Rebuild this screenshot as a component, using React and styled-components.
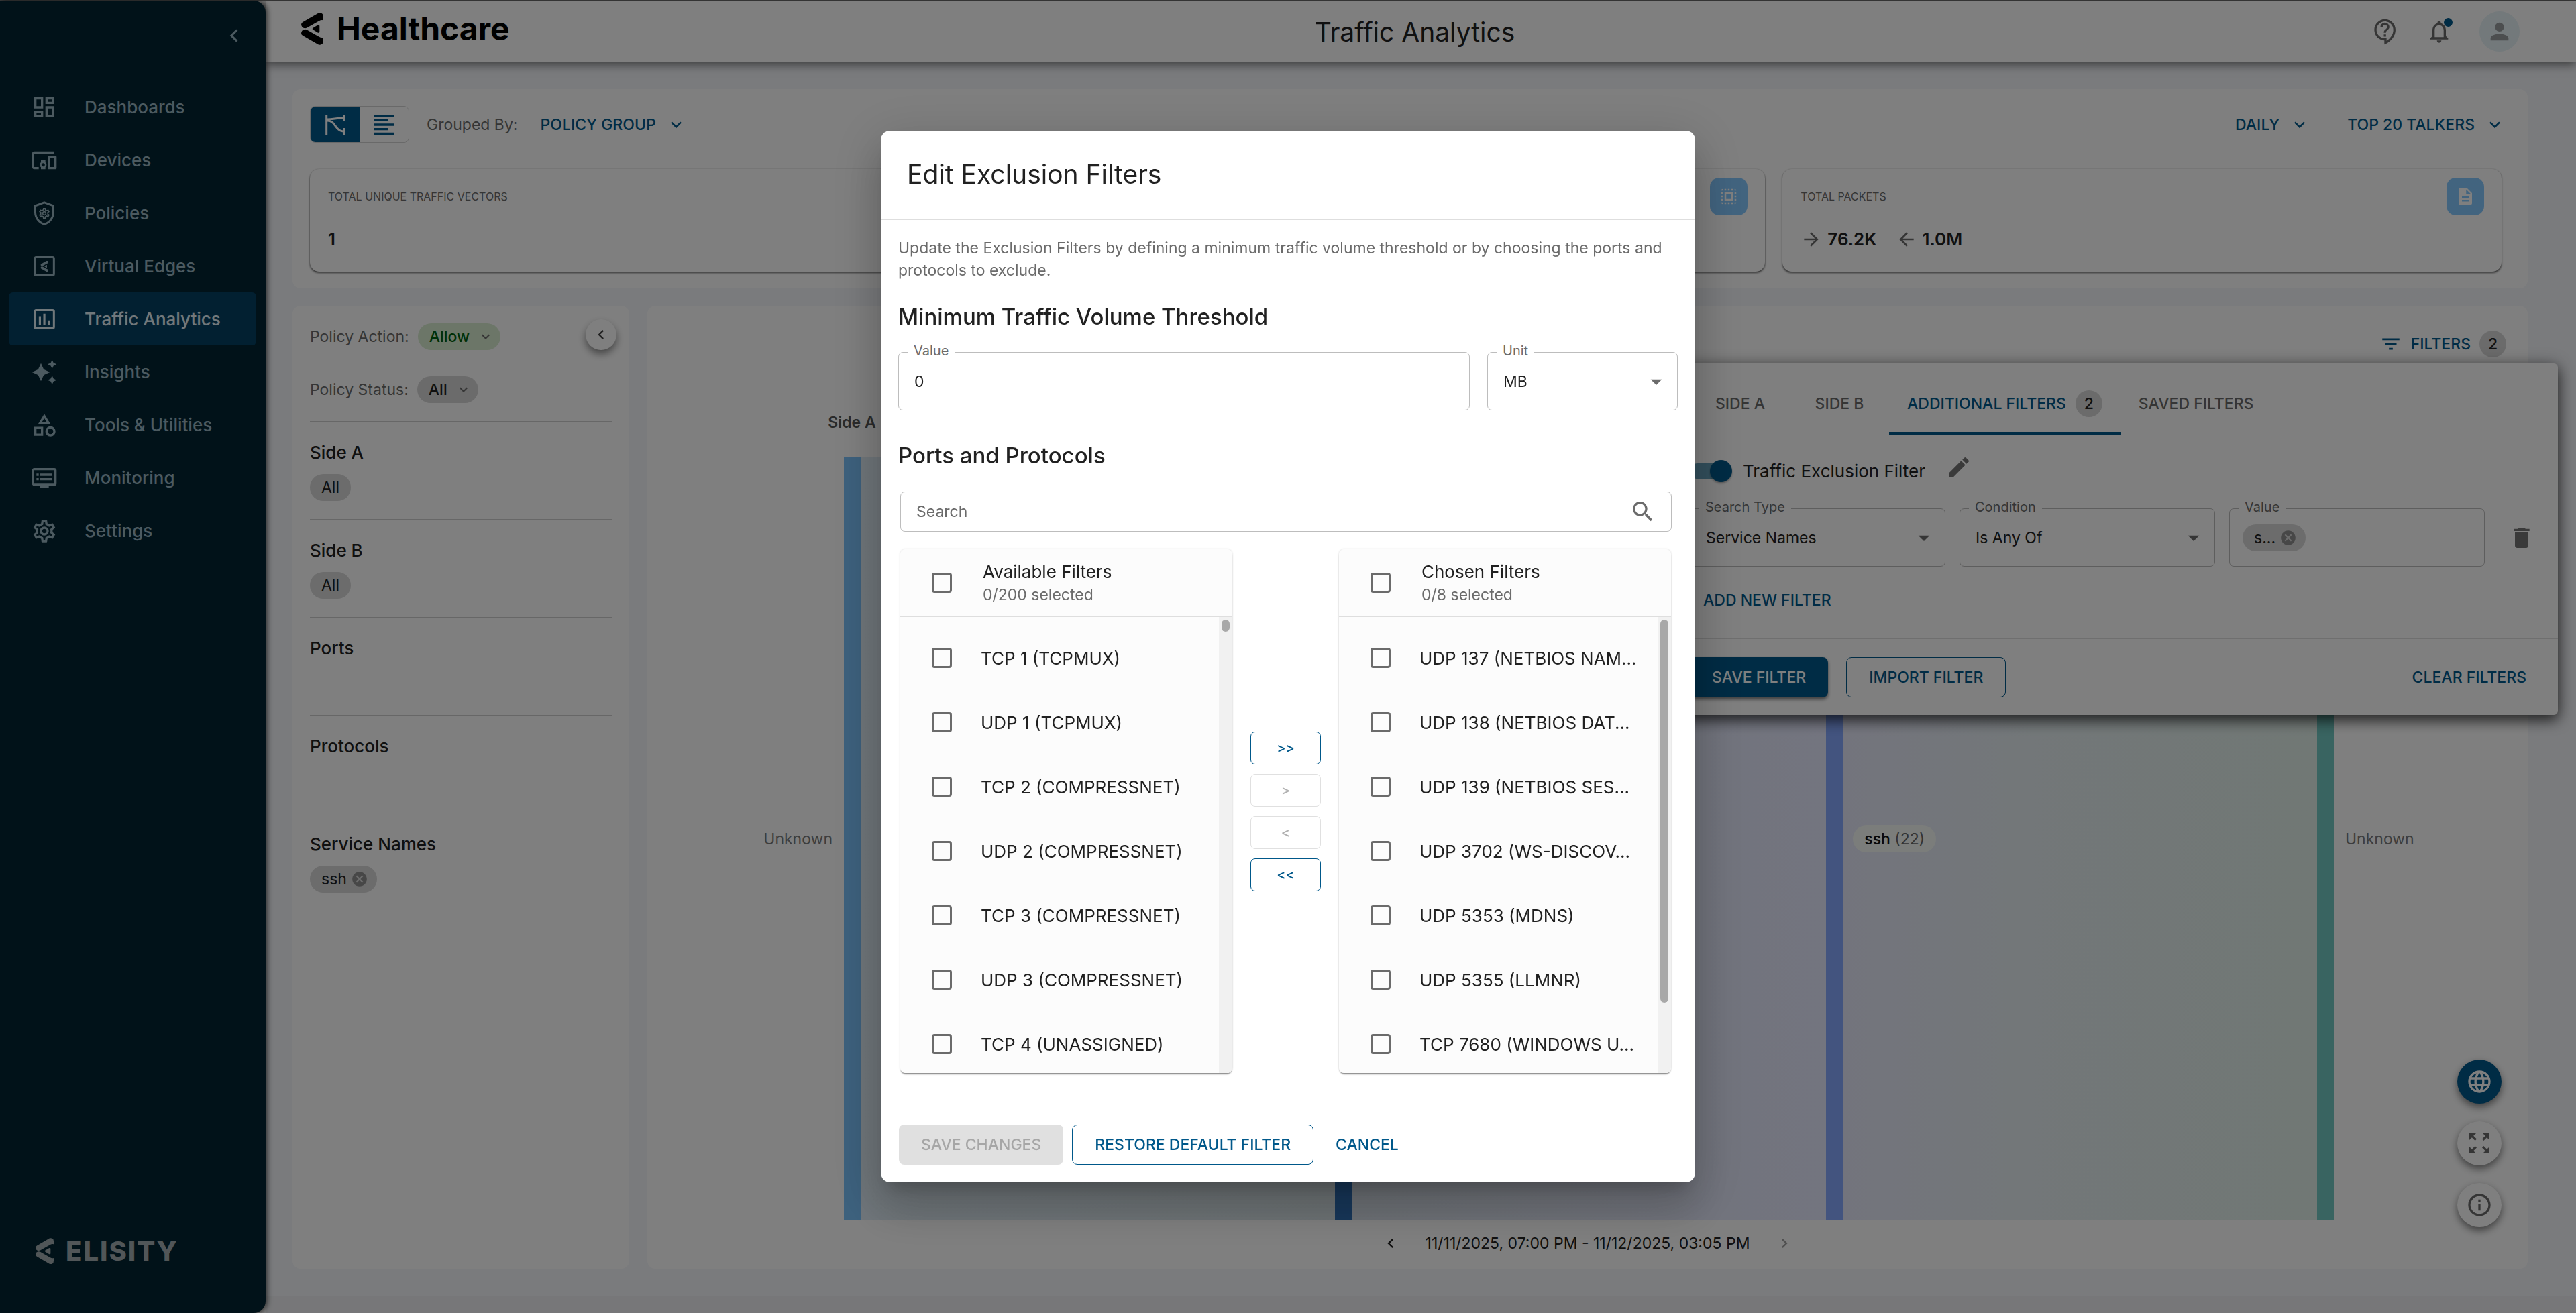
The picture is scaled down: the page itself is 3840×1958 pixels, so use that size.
import React from "react";
import styled, { createGlobalStyle } from "styled-components";
import {
  MdArrowBack,
  MdArrowDropDown,
  MdArrowForward,
  MdAutoAwesome,
  MdCancel,
  MdChevronLeft,
  MdChevronRight,
  MdDelete,
  MdDescription,
  MdDevicesOther,
  MdEdit,
  MdExpandMore,
  MdFilterList,
  MdFormatAlignLeft,
  MdInfoOutline,
  MdLanguage,
  MdNotificationsNone,
  MdOutlineCategory,
  MdOutlineContactSupport,
  MdOutlineDashboard,
  MdOutlineDvr,
  MdOutlineSettings,
  MdPerson,
  MdSearch,
  MdSelectAll,
  MdZoomOutMap,
} from "react-icons/md";

const primary = "#00588a";
const ink = "#212121";
const muted = "#6b6b6b";
const line = "#dedede";

const GlobalStyle = createGlobalStyle`
  * {
    box-sizing: border-box;
  }
  body {
    margin: 0;
    background: #f4f6fa;
    color: ${ink};
    font-family: Inter, "Liberation Sans", sans-serif;
    font-size: 23px;
  }
  button, input, select {
    font: inherit;
    color: inherit;
  }
  button {
    display: inline-flex;
    align-items: center;
    justify-content: center;
    padding: 0;
    border: 0;
    background: none;
    white-space: nowrap;
  }
  svg {
    display: block;
    flex: none;
  }
  h1, h2, h3, p, ul {
    margin: 0;
    padding: 0;
  }
`;

/* ---------- layout ---------- */

const Layout = styled.div`
  display: flex;
  min-height: 100vh;
  border-top: 1px solid #7c7c7c;
  background: #fff;
`;

const Sidebar = styled.aside`
  position: relative;
  z-index: 2;
  display: flex;
  flex-direction: column;
  flex: none;
  width: 396px;
  padding: 32px 14px 72px 13px;
  border-radius: 0 18px 18px 0;
  background: #022432;
  color: #98b4c0;
  box-shadow: 2px 0 8px rgba(0, 0, 0, 0.7);
`;

const Collapse = styled.button`
  align-self: flex-end;
  width: 40px;
  height: 40px;
  margin-right: 13px;
  margin-bottom: 47px;
`;

const NavLink = styled.a`
  display: flex;
  align-items: center;
  gap: 40px;
  height: 79px;
  padding-left: 33px;
  border-radius: 6px;
  background: ${(p) => (p.$active ? "#044062" : "none")};
  color: ${(p) => (p.$active ? "#e2f0f6" : "inherit")};
  font-size: 26px;
  font-weight: 500;
  text-decoration: none;
`;

const Brand = styled.div`
  display: flex;
  align-items: center;
  gap: 18px;
  margin-top: auto;
  padding-left: 40px;
  color: #a2acb0;
  font-size: 40px;
  font-weight: 800;
  line-height: 40px;
  letter-spacing: 2px;
`;

const Main = styled.div`
  display: flex;
  flex-direction: column;
  flex: 1;
  min-width: 0;
`;

const Header = styled.header`
  position: relative;
  z-index: 1;
  display: grid;
  grid-template-columns: 1fr auto 1fr;
  align-items: center;
  height: 92px;
  padding: 0 71px 0 53px;
  background: #fff;
  box-shadow: 0 3px 14px rgba(0, 0, 0, 0.55);
`;

const Tenant = styled.div`
  display: flex;
  align-items: center;
  gap: 20px;
  padding-bottom: 8px;
  color: #000;
  font-size: 48px;
  font-weight: 700;
  line-height: 56px;
`;

const PageTitle = styled.h1`
  font-size: 39px;
  font-weight: 400;
`;

const Actions = styled.div`
  display: flex;
  align-items: center;
  justify-content: flex-end;
  gap: 40px;
  padding-right: 13px;
  color: ${muted};
`;

const Bell = styled.button`
  position: relative;
  &::after {
    content: "";
    position: absolute;
    top: 0;
    right: 0;
    width: 13px;
    height: 13px;
    border-radius: 50%;
    background: ${primary};
  }
`;

const Avatar = styled.button`
  width: 60px;
  height: 60px;
  border-radius: 50%;
  background: #e6f2f6;
  color: #989c9e;
`;

const Content = styled.main`
  display: flex;
  flex-direction: column;
  flex: 1;
  gap: 26px;
  padding: 40px 72px 41px 40px;
  background: #f4f6fa;
`;

const BottomStrip = styled.footer`
  height: 25px;
  background: #eeeff2;
`;

const Panel = styled.section`
  position: relative;
  padding: 25px 26px;
  border-radius: 12px;
  background: #fff;
`;

/* ---------- summary ---------- */

const Toolbar = styled.div`
  display: flex;
  align-items: center;
  height: 55px;
  margin-bottom: 39px;
  padding-right: 7px;
  color: ${muted};
`;

const Toggle = styled.div`
  display: flex;
  height: 55px;
  margin-right: 26px;
  border: 1px solid #d2d2d2;
  border-radius: 8px;
  overflow: hidden;
`;

const ToggleButton = styled.button`
  width: 73px;
  background: ${(p) => (p.$active ? primary : "#fff")};
  color: ${(p) => (p.$active ? "#fff" : primary)};
`;

const DropButton = styled.button`
  gap: 14px;
  margin-left: 34px;
  color: ${primary};
  font-weight: 500;
`;

const Spacer = styled.div`
  flex: 1;
`;

const Rule = styled.div`
  width: 1px;
  height: 52px;
  margin-left: 20px;
  background: ${line};
`;

const Stats = styled.div`
  display: grid;
  grid-template-columns: repeat(3, 1fr);
  gap: 26px;
  padding-right: 13px;
`;

const Stat = styled.div`
  position: relative;
  display: flex;
  flex-direction: column;
  gap: 34px;
  height: 153px;
  padding: 27px 27px 0;
  border-radius: 14px;
  box-shadow: 0 2px 3px rgba(0, 0, 0, 0.6), 0 0 2px rgba(0, 0, 0, 0.2);
`;

const StatLabel = styled.div`
  color: ${muted};
  font-size: 16px;
  line-height: 28px;
`;

const StatValue = styled.div`
  display: flex;
  align-items: center;
  gap: 8px;
  font-size: 26px;
  font-weight: 600;
  line-height: 32px;
  svg {
    color: ${muted};
  }
  span + svg {
    margin-left: 20px;
  }
`;

const StatIcon = styled.div`
  position: absolute;
  top: 13px;
  right: 26px;
  display: flex;
  align-items: center;
  justify-content: center;
  width: 56px;
  height: 56px;
  border-radius: 14px;
  background: #84c8fe;
  color: #fff;
`;

/* ---------- left panel ---------- */

const Columns = styled.div`
  display: flex;
  flex: 1;
  gap: 27px;
`;

const SidePanel = styled(Panel)`
  flex: none;
  width: 502px;
`;

const PolicyRow = styled.div`
  display: flex;
  align-items: center;
  gap: 13px;
  height: 42px;
  margin-bottom: 37px;
  color: ${muted};
  & + & {
    margin-bottom: 26px;
  }
`;

const PillButton = styled.button`
  gap: 12px;
  height: 40px;
  padding: 0 10px 0 17px;
  border-radius: 20px;
  background: ${(p) => (p.$green ? "#d8ecd0" : "#d6d6d6")};
  color: ${(p) => (p.$green ? "#00600c" : ink)};
  font-weight: 500;
  svg {
    color: ${muted};
  }
`;

const RoundButton = styled.button`
  position: absolute;
  top: 20px;
  right: 19px;
  width: 46px;
  height: 46px;
  border-radius: 50%;
  background: #fff;
  color: #444;
  box-shadow: 0 6px 12px rgba(0, 0, 0, 0.45);
`;

const SideGroup = styled.div`
  display: flex;
  flex-direction: column;
  align-items: flex-start;
  gap: 16px;
  height: 146px;
  padding-top: 30px;
  border-top: 1px solid #cfcfcf;
  h3 {
    font-size: 26px;
    font-weight: 500;
    line-height: 32px;
  }
`;

const Chip = styled.span`
  display: inline-flex;
  align-items: center;
  gap: 6px;
  height: 40px;
  padding: ${(p) => (p.$removable ? "0 13px 0 17px" : "0 17px")};
  border-radius: 20px;
  background: #d8d8d8;
  svg {
    color: #8f8f8f;
  }
`;

/* ---------- chart panel ---------- */

const ChartPanel = styled(Panel)`
  display: flex;
  flex-direction: column;
  flex: 1;
  min-width: 0;
  padding: 37px 0 23px;
`;

const FiltersButton = styled.button`
  align-self: flex-end;
  gap: 13px;
  height: 40px;
  margin-right: 32px;
  color: ${primary};
  font-weight: 500;
`;

const Count = styled.span`
  display: inline-flex;
  align-items: center;
  justify-content: center;
  width: 40px;
  height: 40px;
  border-radius: 50%;
  background: #d6d6d6;
  color: ${ink};
`;

const ColumnTitle = styled.div`
  width: 100px;
  margin: 82px 0 37px 255px;
  color: #555;
  font-weight: 600;
  line-height: 30px;
  text-align: center;
`;

const ChartRow = styled.div`
  display: grid;
  grid-template-columns: 293px 1fr 289px;
  align-items: center;
  flex: 1;
`;

const EndLabel = styled.div`
  padding: 0 17px;
  color: #7a7a7a;
  text-align: ${(p) => p.$align};
`;

const Chart = styled.div`
  position: relative;
  align-self: stretch;
  svg {
    position: absolute;
    width: 100%;
    height: 100%;
  }
`;

const FlowLabel = styled.div`
  position: absolute;
  top: 50%;
  left: 68%;
  height: 40px;
  margin: -20px 0 0 -6px;
  padding: 0 17px;
  border-radius: 20px;
  background: #f6faf6;
  color: #666;
  line-height: 40px;
  b {
    color: #111;
    font-weight: 500;
  }
`;

const DateRow = styled.div`
  display: flex;
  align-items: center;
  justify-content: center;
  gap: 38px;
  height: 30px;
  margin-top: 20px;
`;

const PageButton = styled.button`
  &:disabled {
    color: #a0a0a0;
  }
`;

const Fabs = styled.div`
  position: absolute;
  right: 39px;
  bottom: 62px;
  display: flex;
  flex-direction: column;
  gap: 26px;
`;

const Fab = styled.button`
  width: 66px;
  height: 66px;
  border-radius: 50%;
  background: ${(p) => (p.$primary ? primary : "#fff")};
  color: ${(p) => (p.$primary ? "#fff" : muted)};
  box-shadow: 0 5px 12px rgba(0, 0, 0, 0.5);
`;

/* ---------- filter popover ---------- */

const Popover = styled.section`
  position: absolute;
  top: 542px;
  right: 27px;
  z-index: 3;
  width: 1321px;
  border-radius: 6px;
  background: #fff;
  box-shadow: 0 8px 20px rgba(0, 0, 0, 0.6), 0 2px 26px rgba(0, 0, 0, 0.3);
`;

const Tabs = styled.div`
  display: flex;
  height: 107px;
  padding-left: 28px;
  border-bottom: 1px solid ${line};
`;

const Tab = styled.button`
  gap: 14px;
  min-width: 148px;
  padding: 18px 27px 0;
  border-bottom: 4px solid ${(p) => (p.$active ? primary : "transparent")};
  color: ${(p) => (p.$active ? primary : muted)};
  font-weight: 500;
`;

const FilterBody = styled.div`
  height: 303px;
  padding: 26px 21px 0 27px;
`;

const SwitchRow = styled.div`
  display: flex;
  align-items: center;
  gap: 16px;
  height: 54px;
  label {
    font-size: 26px;
  }
  button {
    margin: 0 0 10px 14px;
    color: #757575;
  }
`;

const Switch = styled.input`
  appearance: none;
  position: relative;
  width: 56px;
  height: 23px;
  margin: 0 7px 0 0;
  border-radius: 12px;
  background: #66a0ba;
  &::after {
    content: "";
    position: absolute;
    top: -5px;
    right: -7px;
    width: 33px;
    height: 33px;
    border-radius: 50%;
    background: ${primary};
    box-shadow: 0 2px 3px rgba(0, 0, 0, 0.3);
  }
`;

const FilterFields = styled.div`
  display: grid;
  grid-template-columns: 381px 381px 381px 1fr;
  align-items: center;
  gap: 21px;
  margin: 29px 0 20px;
`;

const Field = styled.div`
  position: relative;
  display: flex;
  align-items: center;
  height: ${(p) => p.$height || 87}px;
  border: 1px solid #bdbdbd;
  border-radius: 7px;
  label {
    position: absolute;
    top: -15px;
    left: 13px;
    padding: 0 9px;
    background: #fff;
    color: ${muted};
    font-size: 20px;
    line-height: 24px;
  }
  input, select {
    appearance: none;
    width: 100%;
    height: 100%;
    padding: 0 23px;
    border: 0;
    outline: 0;
    background: none;
  }
  input::placeholder {
    color: ${muted};
    opacity: 1;
  }
  > svg {
    position: absolute;
    right: ${(p) => p.$iconRight || 11}px;
    color: ${muted};
    pointer-events: none;
  }
`;

const ChipField = styled(Field)`
  padding-left: 19px;
  input {
    flex: 1;
    min-width: 0;
  }
`;

const TextButton = styled.button`
  height: 60px;
  padding: 0 ${(p) => p.$pad || 33}px;
  color: ${primary};
  font-weight: 500;
`;

const OutlineButton = styled(TextButton)`
  border: 1px solid ${primary};
  border-radius: 8px;
`;

const SolidButton = styled(TextButton)`
  border-radius: 8px;
  background: ${primary};
  color: #fff;
  box-shadow: 0 3px 5px rgba(0, 0, 0, 0.5);
  &:disabled {
    background: #e0e0e0;
    color: #a6a6a6;
    box-shadow: none;
  }
`;

const FilterActions = styled.div`
  display: flex;
  align-items: center;
  gap: 27px;
  height: 114px;
  padding: 0 14px 0 27px;
  border-top: 1px solid ${line};
`;

/* ---------- dialog ---------- */

const Backdrop = styled.div`
  position: fixed;
  inset: 0;
  z-index: 10;
  display: flex;
  align-items: center;
  justify-content: center;
  background: rgba(0, 0, 0, 0.5);
`;

const Dialog = styled.div`
  width: 100%;
  max-width: 1214px;
  border-radius: 14px;
  background: #fff;
  box-shadow: 0 18px 25px -12px rgba(0, 0, 0, 0.2),
    0 40px 63px 5px rgba(0, 0, 0, 0.14), 0 15px 76px 13px rgba(0, 0, 0, 0.12);
`;

const DialogTitle = styled.h2`
  height: 133px;
  padding-left: 39px;
  border-bottom: 1px solid ${line};
  font-size: 39px;
  font-weight: 400;
  line-height: 130px;
`;

const DialogBody = styled.div`
  padding: 26px 26px 49px;
`;

const Intro = styled.p`
  color: ${muted};
  line-height: 33px;
`;

const SectionTitle = styled.h3`
  margin: ${(p) => p.$margin};
  font-size: 33px;
  font-weight: 500;
  line-height: 40px;
`;

const Threshold = styled.div`
  display: grid;
  grid-template-columns: 3fr 1fr;
  gap: 26px;
`;

const SearchWrap = styled.div`
  padding: 0 9px 26px 3px;
`;

const Transfer = styled.div`
  display: flex;
  align-items: center;
  gap: 27px;
  padding: 0 10px 0 3px;
`;

const TransferButtons = styled.div`
  display: flex;
  flex-direction: column;
  gap: 14px;
  width: 105px;
`;

const MoveButton = styled.button`
  height: 49px;
  border: 1px solid ${primary};
  border-radius: 7px;
  color: ${primary};
  font-size: 20px;
  font-weight: 500;
  &:disabled {
    border-color: #e0e0e0;
    color: #b0b0b0;
  }
`;

const ListCard = styled.div`
  display: flex;
  flex-direction: column;
  flex: 1;
  min-width: 0;
  height: 781px;
  border-radius: 8px;
  background: #fcfcfc;
  overflow: hidden;
`;

const ListShadow = styled.div`
  display: flex;
  flex: 1;
  min-width: 0;
  border-radius: 8px;
  box-shadow: 0 3px 2px -1px rgba(0, 0, 0, 0.4), 0 0 3px rgba(0, 0, 0, 0.18);
`;

const ListHead = styled.label`
  display: flex;
  align-items: center;
  gap: 46px;
  height: 101px;
  padding-left: 47px;
  border-bottom: 1px solid ${line};
  font-size: 26px;
  line-height: 36px;
  small {
    display: block;
    color: ${muted};
    font-size: 23px;
    line-height: 32px;
  }
`;

const ListBody = styled.div`
  display: flex;
  flex: 1;
  min-height: 0;
`;

const Items = styled.ul`
  flex: 1;
  min-width: 0;
  padding-top: 13px;
  list-style: none;
  overflow: hidden;
`;

const Item = styled.label`
  display: flex;
  align-items: center;
  gap: 43px;
  height: 96px;
  padding-left: 47px;
  font-size: 26px;
  white-space: nowrap;
`;

const Tick = styled.input`
  appearance: none;
  flex: none;
  width: 30px;
  height: 30px;
  margin: 0;
  border: 3px solid ${muted};
  border-radius: 4px;
`;

const Track = styled.div`
  width: 20px;
  padding: 4px 4px;
  background: #f1f1f1;
`;

const Thumb = styled.div`
  height: ${(p) => p.$height}px;
  border-radius: 6px;
  background: #a8a8a8;
`;

const DialogActions = styled.div`
  display: flex;
  align-items: center;
  gap: 13px;
  height: 114px;
  padding-left: 27px;
  border-top: 1px solid ${line};
`;

/* ---------- drawings ---------- */

function ElisityMark({ width = 33 }) {
  return (
    <svg width={width} viewBox="0 0 99 144" fill="currentColor" aria-hidden="true">
      <path d="M76 2Q84-1 93 4Q99 8 99 18V34Q90 31 80 37L27 67Q14 74 4 64Q-5 49 7 42Z" />
      <path d="M76 142Q84 145 93 140Q99 136 99 126V110Q90 113 80 107L27 77Q14 70 4 80Q-5 95 7 102Z" />
      <path d="M53 68L75 55Q82 53 82 60V84Q82 91 75 89L53 76Q47 72 53 68Z" />
    </svg>
  );
}

function EdgeIcon() {
  return (
    <svg width="40" height="40" viewBox="0 0 24 24" fill="none" aria-hidden="true">
      <rect x="3.4" y="3.9" width="17.2" height="16.2" rx="1.2" stroke="currentColor" strokeWidth="1.8" />
      <svg x="8.6" y="7" width="7" height="10" viewBox="0 0 99 144" fill="currentColor">
        <path d="M76 2Q84-1 93 4Q99 8 99 18V34Q90 31 80 37L27 67Q14 74 4 64Q-5 49 7 42Z" />
        <path d="M76 142Q84 145 93 140Q99 136 99 126V110Q90 113 80 107L27 77Q14 70 4 80Q-5 95 7 102Z" />
        <path d="M53 68L75 55Q82 53 82 60V84Q82 91 75 89L53 76Q47 72 53 68Z" />
      </svg>
    </svg>
  );
}

function PolicyIcon() {
  return (
    <svg width="40" height="40" viewBox="0 0 24 24" fill="none" aria-hidden="true">
      <path d="M12 2.3L20.1 5.3V11C20.1 16 16.7 20.5 12 21.8C7.3 20.5 3.9 16 3.9 11V5.3Z" stroke="currentColor" strokeWidth="1.8" />
      <g transform="translate(6.2 6.2) scale(0.483)" color="currentColor">
        <MdOutlineSettings size={24} />
      </g>
    </svg>
  );
}

function AnalyticsIcon() {
  return (
    <svg width="40" height="40" viewBox="0 0 24 24" fill="none" aria-hidden="true">
      <rect x="3.4" y="3.9" width="17.2" height="16.2" rx="1.2" stroke="currentColor" strokeWidth="1.8" />
      <path d="M7.1 9.3h1.9V17H7.1zM11.1 7h1.9v10h-1.9zM15.1 13h1.9v4h-1.9z" fill="currentColor" />
    </svg>
  );
}

function SankeyIcon() {
  return (
    <svg width="30" height="30" viewBox="0 0 30 30" fill="none" stroke="currentColor" strokeWidth="3" aria-hidden="true">
      <path d="M1.7 0V30" />
      <path d="M28.3 0V10M28.3 20V30" />
      <path d="M3 7C12 7 17 5 28 5" />
      <path d="M3 9C16 9 14 25 28 25" />
    </svg>
  );
}

function Sankey() {
  return (
    <svg viewBox="0 0 2221 1137" preserveAspectRatio="none" role="img" aria-label="Traffic flow">
      <defs>
        <linearGradient id="flowA">
          <stop offset="0" stopColor="#e0edf6" />
          <stop offset="1" stopColor="#dbe6ea" />
        </linearGradient>
        <linearGradient id="flowB">
          <stop offset="0" stopColor="#dbe3ec" />
          <stop offset="1" stopColor="#e7eaff" />
        </linearGradient>
        <linearGradient id="flowC">
          <stop offset="0" stopColor="#e7e9fa" />
          <stop offset="0.4" stopColor="#e6eff2" />
          <stop offset="1" stopColor="#e2f0ea" />
        </linearGradient>
      </defs>
      <rect x="25" width="707" height="1137" fill="url(#flowA)" />
      <rect x="757" width="707" height="1137" fill="url(#flowB)" />
      <rect x="1489" width="707" height="1137" fill="url(#flowC)" />
      <rect width="25" height="1137" fill="#7ac2fa" />
      <rect x="732" width="25" height="1137" fill="#2e6eb4" />
      <rect x="1464" width="25" height="1137" fill="#86a8fe" />
      <rect x="2196" width="25" height="1137" fill="#72c8c2" />
    </svg>
  );
}

/* ---------- data ---------- */

const nav = [
  { label: "Dashboards", icon: <MdOutlineDashboard size={40} /> },
  { label: "Devices", icon: <MdDevicesOther size={40} /> },
  { label: "Policies", icon: <PolicyIcon /> },
  { label: "Virtual Edges", icon: <EdgeIcon /> },
  { label: "Traffic Analytics", icon: <AnalyticsIcon />, active: true },
  { label: "Insights", icon: <MdAutoAwesome size={40} /> },
  { label: "Tools & Utilities", icon: <MdOutlineCategory size={40} /> },
  { label: "Monitoring", icon: <MdOutlineDvr size={40} /> },
  { label: "Settings", icon: <MdOutlineSettings size={40} /> },
];

const available = [
  "TCP 1 (TCPMUX)",
  "UDP 1 (TCPMUX)",
  "TCP 2 (COMPRESSNET)",
  "UDP 2 (COMPRESSNET)",
  "TCP 3 (COMPRESSNET)",
  "UDP 3 (COMPRESSNET)",
  "TCP 4 (UNASSIGNED)",
];

const chosen = [
  "UDP 137 (NETBIOS NAM...",
  "UDP 138 (NETBIOS DAT...",
  "UDP 139 (NETBIOS SES...",
  "UDP 3702 (WS-DISCOV...",
  "UDP 5353 (MDNS)",
  "UDP 5355 (LLMNR)",
  "TCP 7680 (WINDOWS U...",
];

/* ---------- parts ---------- */

function FilterList(props) {
  const { title, selected, items, thumb } = props;
  return (
    <ListShadow>
      <ListCard>
        <ListHead>
          <Tick type="checkbox" />
          <span>
            {title}
            <small>{selected}</small>
          </span>
        </ListHead>
        <ListBody>
          <Items>
            {items.map((item) => (
              <li key={item}>
                <Item>
                  <Tick type="checkbox" />
                  {item}
                </Item>
              </li>
            ))}
          </Items>
          <Track>
            <Thumb $height={thumb} />
          </Track>
        </ListBody>
      </ListCard>
    </ListShadow>
  );
}

function FilterPopover() {
  return (
    <Popover>
      <Tabs>
        <Tab>SIDE A</Tab>
        <Tab>SIDE B</Tab>
        <Tab $active>
          ADDITIONAL FILTERS <Count>2</Count>
        </Tab>
        <Tab>SAVED FILTERS</Tab>
      </Tabs>
      <FilterBody>
        <SwitchRow>
          <Switch type="checkbox" id="exclusion" defaultChecked />
          <label htmlFor="exclusion">Traffic Exclusion Filter</label>
          <button aria-label="Edit exclusion filter">
            <MdEdit size={40} />
          </button>
        </SwitchRow>
        <FilterFields>
          <Field>
            <label htmlFor="type">Search Type</label>
            <select id="type">
              <option>Service Names</option>
            </select>
            <MdArrowDropDown size={40} />
          </Field>
          <Field>
            <label htmlFor="condition">Condition</label>
            <select id="condition">
              <option>Is Any Of</option>
            </select>
            <MdArrowDropDown size={40} />
          </Field>
          <ChipField>
            <label htmlFor="names">Value</label>
            <Chip $removable>
              s... <MdCancel size={26} />
            </Chip>
            <input id="names" />
          </ChipField>
          <button aria-label="Delete filter">
            <MdDelete size={40} color="#757575" />
          </button>
        </FilterFields>
        <TextButton $pad={20}>ADD NEW FILTER</TextButton>
      </FilterBody>
      <FilterActions>
        <SolidButton>SAVE FILTER</SolidButton>
        <OutlineButton>IMPORT FILTER</OutlineButton>
        <Spacer />
        <TextButton>CLEAR FILTERS</TextButton>
      </FilterActions>
    </Popover>
  );
}

function ExclusionDialog() {
  return (
    <Backdrop>
      <Dialog role="dialog" aria-labelledby="dialog-title">
        <DialogTitle id="dialog-title">Edit Exclusion Filters</DialogTitle>
        <DialogBody>
          <Intro>
            Update the Exclusion Filters by defining a minimum traffic volume
            threshold or by choosing the ports and protocols to exclude.
          </Intro>
          <SectionTitle $margin="32px 0 33px">
            Minimum Traffic Volume Threshold
          </SectionTitle>
          <Threshold>
            <Field>
              <label htmlFor="value">Value</label>
              <input id="value" defaultValue="0" />
            </Field>
            <Field>
              <label htmlFor="unit">Unit</label>
              <select id="unit">
                <option>MB</option>
              </select>
              <MdArrowDropDown size={40} />
            </Field>
          </Threshold>
          <SectionTitle $margin="47px 0 34px">Ports and Protocols</SectionTitle>
          <SearchWrap>
            <Field $height={60} $iconRight={22}>
              <input type="text" placeholder="Search" aria-label="Search" />
              <MdSearch size={40} />
            </Field>
          </SearchWrap>
          <Transfer>
            <FilterList
              title="Available Filters"
              selected="0/200 selected"
              items={available}
              thumb={18}
            />
            <TransferButtons>
              <MoveButton>&gt;&gt;</MoveButton>
              <MoveButton disabled>&gt;</MoveButton>
              <MoveButton disabled>&lt;</MoveButton>
              <MoveButton>&lt;&lt;</MoveButton>
            </TransferButtons>
            <FilterList
              title="Chosen Filters"
              selected="0/8 selected"
              items={chosen}
              thumb={571}
            />
          </Transfer>
        </DialogBody>
        <DialogActions>
          <SolidButton disabled>SAVE CHANGES</SolidButton>
          <OutlineButton>RESTORE DEFAULT FILTER</OutlineButton>
          <TextButton $pad={20}>CANCEL</TextButton>
        </DialogActions>
      </Dialog>
    </Backdrop>
  );
}

function App() {
  return (
    <>
      <GlobalStyle />
      <Layout>
        <Sidebar>
          <Collapse aria-label="Collapse menu">
            <MdChevronLeft size={38} />
          </Collapse>
          <nav>
            {nav.map((item) => (
              <NavLink href="#" key={item.label} $active={item.active}>
                {item.icon}
                {item.label}
              </NavLink>
            ))}
          </nav>
          <Brand>
            <ElisityMark width={27} />
            ELISITY
          </Brand>
        </Sidebar>
        <Main>
          <Header>
            <Tenant>
              <ElisityMark />
              Healthcare
            </Tenant>
            <PageTitle>Traffic Analytics</PageTitle>
            <Actions>
              <button aria-label="Help">
                <MdOutlineContactSupport size={40} />
              </button>
              <Bell aria-label="Notifications">
                <MdNotificationsNone size={40} />
              </Bell>
              <Avatar aria-label="Account">
                <MdPerson size={40} />
              </Avatar>
            </Actions>
          </Header>
          <Content>
            <Panel>
              <Toolbar>
                <Toggle>
                  <ToggleButton $active aria-label="Sankey view">
                    <SankeyIcon />
                  </ToggleButton>
                  <ToggleButton aria-label="List view">
                    <MdFormatAlignLeft size={40} />
                  </ToggleButton>
                </Toggle>
                Grouped By:
                <DropButton>
                  POLICY GROUP <MdExpandMore size={32} />
                </DropButton>
                <Spacer />
                <DropButton>
                  DAILY <MdExpandMore size={32} />
                </DropButton>
                <Rule />
                <DropButton>
                  TOP 20 TALKERS <MdExpandMore size={32} />
                </DropButton>
              </Toolbar>
              <Stats>
                <Stat>
                  <StatLabel>TOTAL UNIQUE TRAFFIC VECTORS</StatLabel>
                  <StatValue>1</StatValue>
                </Stat>
                <Stat>
                  <StatIcon>
                    <MdSelectAll size={30} />
                  </StatIcon>
                </Stat>
                <Stat>
                  <StatLabel>TOTAL PACKETS</StatLabel>
                  <StatValue>
                    <MdArrowForward size={32} />
                    <span>76.2K</span>
                    <MdArrowBack size={32} />
                    <span>1.0M</span>
                  </StatValue>
                  <StatIcon>
                    <MdDescription size={30} />
                  </StatIcon>
                </Stat>
              </Stats>
            </Panel>
            <Columns>
              <SidePanel>
                <PolicyRow>
                  Policy Action:
                  <PillButton $green>
                    Allow <MdExpandMore size={24} />
                  </PillButton>
                </PolicyRow>
                <PolicyRow>
                  Policy Status:
                  <PillButton>
                    All <MdExpandMore size={24} />
                  </PillButton>
                </PolicyRow>
                <RoundButton aria-label="Collapse panel">
                  <MdChevronLeft size={28} />
                </RoundButton>
                <SideGroup>
                  <h3>Side A</h3>
                  <Chip>All</Chip>
                </SideGroup>
                <SideGroup>
                  <h3>Side B</h3>
                  <Chip>All</Chip>
                </SideGroup>
                <SideGroup>
                  <h3>Ports</h3>
                </SideGroup>
                <SideGroup>
                  <h3>Protocols</h3>
                </SideGroup>
                <SideGroup>
                  <h3>Service Names</h3>
                  <Chip $removable>
                    ssh <MdCancel size={26} />
                  </Chip>
                </SideGroup>
              </SidePanel>
              <ChartPanel>
                <FiltersButton>
                  <MdFilterList size={34} />
                  FILTERS <Count>2</Count>
                </FiltersButton>
                <ColumnTitle>Side A</ColumnTitle>
                <ChartRow>
                  <EndLabel $align="right">Unknown</EndLabel>
                  <Chart>
                    <Sankey />
                    <FlowLabel>
                      <b>ssh</b> (22)
                    </FlowLabel>
                  </Chart>
                  <EndLabel $align="left">Unknown</EndLabel>
                </ChartRow>
                <DateRow>
                  <PageButton aria-label="Previous period">
                    <MdChevronLeft size={28} />
                  </PageButton>
                  11/11/2025, 07:00 PM - 11/12/2025, 03:05 PM
                  <PageButton aria-label="Next period" disabled>
                    <MdChevronRight size={28} />
                  </PageButton>
                </DateRow>
                <Fabs>
                  <Fab $primary aria-label="Global view">
                    <MdLanguage size={40} />
                  </Fab>
                  <Fab aria-label="Fit to screen">
                    <MdZoomOutMap size={40} />
                  </Fab>
                  <Fab aria-label="Legend">
                    <MdInfoOutline size={40} />
                  </Fab>
                </Fabs>
              </ChartPanel>
            </Columns>
          </Content>
          <BottomStrip />
        </Main>
      </Layout>
      <FilterPopover />
      <ExclusionDialog />
    </>
  );
}

export default App;
